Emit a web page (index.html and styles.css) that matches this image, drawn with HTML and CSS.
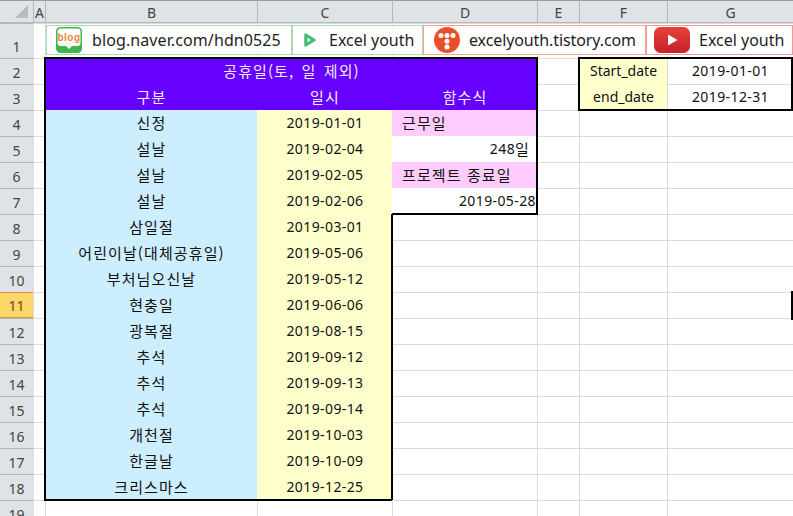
FILE: index.html
```html
<!DOCTYPE html>
<html lang="ko">
<head>
<meta charset="utf-8">
<title>공휴일</title>
<link rel="stylesheet" href="styles.css">
</head>
<body>
<div class="sheet">
  <div class="ch corner"><span class="tri"></span></div>
  <div class="ch">A</div><div class="ch">B</div><div class="ch">C</div><div class="ch">D</div><div class="ch">E</div><div class="ch">F</div><div class="ch">G</div>

  <div class="rh">1</div><div class="c"></div><div class="c"></div><div class="c"></div><div class="c"></div><div class="c"></div><div class="c"></div><div class="c"></div>

  <div class="rh">2</div><div class="c"></div><div class="c head ko span3 title">공휴일(토, 일 제외)</div><div class="c"></div><div class="c yel">Start_date</div><div class="c num">2019-01-01</div>
  <div class="rh">3</div><div class="c"></div><div class="c head ko">구분</div><div class="c head ko">일시</div><div class="c head ko">함수식</div><div class="c"></div><div class="c yel">end_date</div><div class="c num">2019-12-31</div>

  <div class="rh">4</div><div class="c"></div><div class="c blue ko">신정</div><div class="c yel num">2019-01-01</div><div class="c pink ko left">근무일</div><div class="c"></div><div class="c"></div><div class="c"></div>
  <div class="rh">5</div><div class="c"></div><div class="c blue ko">설날</div><div class="c yel num">2019-02-04</div><div class="c white right pad num">248<span class="ko">일</span></div><div class="c"></div><div class="c"></div><div class="c"></div>
  <div class="rh">6</div><div class="c"></div><div class="c blue ko">설날</div><div class="c yel num">2019-02-05</div><div class="c pink ko left">프로젝트 종료일</div><div class="c"></div><div class="c"></div><div class="c"></div>
  <div class="rh">7</div><div class="c"></div><div class="c blue ko">설날</div><div class="c yel num">2019-02-06</div><div class="c white right num">2019-05-28</div><div class="c"></div><div class="c"></div><div class="c"></div>
  <div class="rh">8</div><div class="c"></div><div class="c blue ko">삼일절</div><div class="c yel num">2019-03-01</div><div class="c"></div><div class="c"></div><div class="c"></div><div class="c"></div>
  <div class="rh">9</div><div class="c"></div><div class="c blue ko">어린이날(대체공휴일)</div><div class="c yel num">2019-05-06</div><div class="c"></div><div class="c"></div><div class="c"></div><div class="c"></div>
  <div class="rh">10</div><div class="c"></div><div class="c blue ko">부처님오신날</div><div class="c yel num">2019-05-12</div><div class="c"></div><div class="c"></div><div class="c"></div><div class="c"></div>
  <div class="rh sel">11</div><div class="c"></div><div class="c blue ko">현충일</div><div class="c yel num">2019-06-06</div><div class="c"></div><div class="c"></div><div class="c"></div><div class="c"></div>
  <div class="rh">12</div><div class="c"></div><div class="c blue ko">광복절</div><div class="c yel num">2019-08-15</div><div class="c"></div><div class="c"></div><div class="c"></div><div class="c"></div>
  <div class="rh">13</div><div class="c"></div><div class="c blue ko">추석</div><div class="c yel num">2019-09-12</div><div class="c"></div><div class="c"></div><div class="c"></div><div class="c"></div>
  <div class="rh">14</div><div class="c"></div><div class="c blue ko">추석</div><div class="c yel num">2019-09-13</div><div class="c"></div><div class="c"></div><div class="c"></div><div class="c"></div>
  <div class="rh">15</div><div class="c"></div><div class="c blue ko">추석</div><div class="c yel num">2019-09-14</div><div class="c"></div><div class="c"></div><div class="c"></div><div class="c"></div>
  <div class="rh">16</div><div class="c"></div><div class="c blue ko">개천절</div><div class="c yel num">2019-10-03</div><div class="c"></div><div class="c"></div><div class="c"></div><div class="c"></div>
  <div class="rh">17</div><div class="c"></div><div class="c blue ko">한글날</div><div class="c yel num">2019-10-09</div><div class="c"></div><div class="c"></div><div class="c"></div><div class="c"></div>
  <div class="rh">18</div><div class="c"></div><div class="c blue ko">크리스마스</div><div class="c yel num">2019-12-25</div><div class="c"></div><div class="c"></div><div class="c"></div><div class="c"></div>
  <div class="rh">19</div><div class="c"></div><div class="c"></div><div class="c"></div><div class="c"></div><div class="c"></div><div class="c"></div><div class="c"></div>

  <span class="frame f-main"></span>
  <span class="frame f-func"></span>
  <span class="frame f-date"></span>
  <span class="frame f-colc"></span>
  <span class="cursor"></span>

  <div class="banners">
    <a class="ban ban-blog">
      <svg class="ic" width="26" height="26" viewBox="0 0 26 26"><rect width="26" height="26" rx="4.500" fill="#3db54a"/><path d="M4.500 1.500h17a3 3 0 0 1 3 3v11.500a3 3 0 0 1-3 3H16l-3 3-3-3H4.500a3 3 0 0 1-3-3V4.500a3 3 0 0 1 3-3z" fill="#fff"/><text x="13" y="13.500" class="blogt">blog</text></svg>
      <span class="bt t1">blog.naver.com/hdn0525</span>
    </a>
    <a class="ban ban-play">
      <svg class="ic" width="12" height="14" viewBox="0 0 12 14"><path d="M1.500 1.500 10.500 7 1.500 12.500z" fill="#43bb73" stroke="#43bb73" stroke-width="2.500" stroke-linejoin="round"/><path d="M3.500 4.800 7 7 3.500 9.200z" fill="#fff"/></svg>
      <span class="bt t2">Excel youth</span>
    </a>
    <a class="ban ban-tis">
      <svg class="ic" width="26" height="26" viewBox="0 0 26 26"><circle cx="13" cy="13" r="13" fill="#ea5028"/><g fill="#fff"><circle cx="7" cy="8.500" r="2.500"/><circle cx="13" cy="8.500" r="2.500"/><circle cx="19" cy="8.500" r="2.500"/><circle cx="13" cy="14.200" r="2.500"/><circle cx="13" cy="20" r="2.500"/></g></svg>
      <span class="bt t3">excelyouth.tistory.com</span>
    </a>
    <a class="ban ban-yt">
      <svg class="ic" width="36" height="26" viewBox="0 0 36 26"><defs><linearGradient id="yg" x1="0" y1="0" x2="0" y2="1"><stop offset="0" stop-color="#e8403c"/><stop offset="1" stop-color="#c4222a"/></linearGradient></defs><rect width="36" height="26" rx="6.500" fill="url(#yg)"/><path d="M14 7.500 23.500 13 14 18.500z" fill="#fff"/></svg>
      <span class="bt t4">Excel youth</span>
    </a>
  </div>
</div>
</body>
</html>
```
FILE: styles.css
```css
html, body {
  margin: 0;
  padding: 0;
  height: 100%;
  overflow: hidden;
  background: #fff;
}
.sheet {
  position: relative;
  display: grid;
  width: 793px;
  height: 516px;
  overflow: hidden;
  grid-template-columns: 33px 12px 212px 135px 145px 42px 88px 126px;
  grid-template-rows: 23px 35px repeat(18, 26px);
  font-family: "Noto Sans", "Noto Sans CJK KR", sans-serif;
  font-size: 14px;
  color: #111;
}
.ch {
  box-sizing: border-box;
  display: flex;
  align-items: center;
  justify-content: center;
  background: #dfe3e8;
  border-top: 1px solid #9b9b9b;
  border-left: 1px solid #b4b6b9;
  border-bottom: 1px solid #b4b6b9;
  color: #444;
  padding-top: 1px;
}
.corner { justify-content: flex-start; border-left: 0; }
.tri {
  display: block;
  width: 0;
  height: 0;
  margin: 0 0 2px 15px;
  border-left: 13px solid transparent;
  border-bottom: 13px solid #b9bcbf;
}
.rh {
  box-sizing: border-box;
  display: flex;
  align-items: flex-end;
  justify-content: center;
  background: #dfe3e8;
  border-top: 1px solid #b4b6b9;
  color: #444;
  line-height: 22px;
}
.rh.sel {
  background: #fdd767;
  border: 1px solid #cf9340;
  border-width: 1px 0;
  color: #5c4a20;
}
.c {
  box-sizing: border-box;
  display: flex;
  align-items: center;
  justify-content: center;
  padding-bottom: 2px;
  white-space: nowrap;
  border-left: 1px solid #dcdcdc;
  border-top: 1px solid #dcdcdc;
}
.head, .blue, .yel, .pink { border-color: transparent; }
.head { background: #6600ff; color: #f4ecff; }
.span3 { grid-column: span 3; }
.title { word-spacing: 2px; }
.blue { background: #cceeff; }
.yel { background: #ffffcc; }
.pink { background: #ffccff; }
.white { background: #fff; border-color: transparent; }
.left { justify-content: flex-start; padding-left: 9px; }
.right { justify-content: flex-end; padding-right: 1px; }
.right.pad { padding-right: 7px; }
.ko {
  font-family: "Noto Sans CJK KR", "Noto Sans", sans-serif;
  font-size: 15px;
  letter-spacing: 1.1px;
}
.num { letter-spacing: 0.4px; }
.frame {
  position: absolute;
  border: 0 solid #000;
  pointer-events: none;
}
.f-main {
  grid-area: 3 / 3 / 20 / 5;
  inset: -1px 0 -1px -1px;
  border-width: 2px 0 2px 2px;
}
.f-func {
  grid-area: 3 / 5 / 9 / 6;
  inset: -1px -1px -1px 0;
  border-width: 2px 2px 2px 0;
}
.f-colc {
  grid-area: 9 / 4 / 20 / 5;
  inset: 0 -1px 0 auto;
  width: 2px;
  background: #000;
}
.f-date {
  grid-area: 3 / 7 / 5 / 9;
  inset: -1px 0 -1px -1px;
  border-width: 2px;
}
.cursor {
  position: absolute;
  left: 791px;
  top: 291px;
  width: 2px;
  height: 29px;
  background: #000;
}
.banners {
  position: absolute;
  left: 46px;
  top: 25px;
  display: flex;
  height: 30px;
}
.ban {
  box-sizing: border-box;
  display: flex;
  align-items: center;
  height: 30px;
  border: 1px solid;
  background: rgba(255, 255, 255, 0.86);
  font-size: 16px;
  color: #1e1e1e;
  white-space: nowrap;
}
.ban-blog { width: 246px; border-color: #a9dcb4; padding-left: 9px; }
.ban-play { width: 131px; border-color: #a9dcb4; padding-left: 11px; }
.ban-tis { width: 223px; border-color: #f4a892; padding-left: 10px; }
.ban-yt { width: 147px; border-color: #f2999d; padding-left: 7px; }
.ic { flex: none; display: block; }
.bt { display: block; }
.t1 { margin-left: 10px; letter-spacing: 0.1px; }
.t2 { margin-left: 13px; }
.t3 { margin-left: 9px; letter-spacing: -0.1px; }
.t4 { margin-left: 9px; }
.blogt {
  font-family: "Liberation Sans", sans-serif;
  font-size: 10px;
  font-weight: 700;
  letter-spacing: 0.5px;
  fill: #f0843c;
  text-anchor: middle;
}
```
